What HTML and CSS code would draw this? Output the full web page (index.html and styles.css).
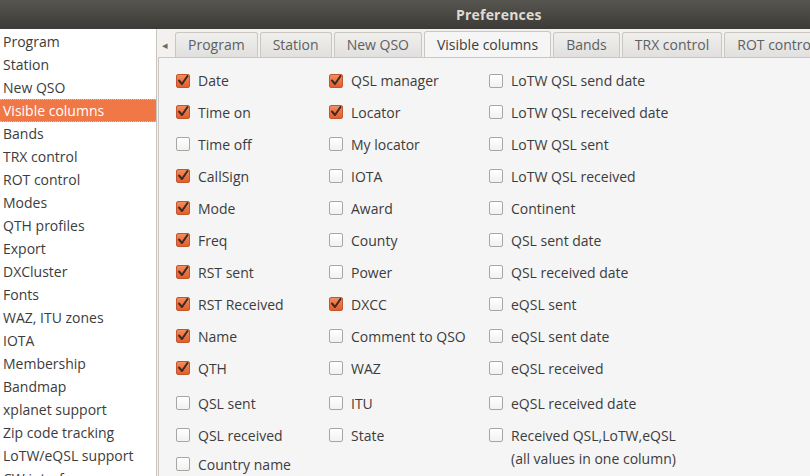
FILE: index.html
```html
<!DOCTYPE html>
<html>
<head>
<meta charset="utf-8">
<title>Preferences</title>
<link rel="stylesheet" href="styles.css">
</head>
<body>
<div class="window">
  <div class="titlebar"><span class="title">Preferences</span></div>
  <div class="main">
    <ul class="sidebar">
      <li>Program</li>
      <li>Station</li>
      <li>New QSO</li>
      <li class="selected">Visible columns</li>
      <li>Bands</li>
      <li>TRX control</li>
      <li>ROT control</li>
      <li>Modes</li>
      <li>QTH profiles</li>
      <li>Export</li>
      <li>DXCluster</li>
      <li>Fonts</li>
      <li>WAZ, ITU zones</li>
      <li>IOTA</li>
      <li>Membership</li>
      <li>Bandmap</li>
      <li>xplanet support</li>
      <li>Zip code tracking</li>
      <li>LoTW/eQSL support</li>
      <li>CW interface</li>
    </ul>
    <div class="tabpane">
      <div class="tabbar">
        <span class="arrow">&#9666;</span>
        <div class="tab">Program</div>
        <div class="tab">Station</div>
        <div class="tab">New QSO</div>
        <div class="tab active">Visible columns</div>
        <div class="tab">Bands</div>
        <div class="tab">TRX control</div>
        <div class="tab">ROT control</div>
      </div>
      <div class="panel">
        <div class="grid">
          <label class="item"><span class="box on"><svg viewBox="0 0 14 14"><path d="M3 6.5 L6 10 L11.5 2"/></svg></span>Date</label>
          <label class="item"><span class="box on"><svg viewBox="0 0 14 14"><path d="M3 6.5 L6 10 L11.5 2"/></svg></span>QSL manager</label>
          <label class="item"><span class="box"></span>LoTW QSL send date</label>

          <label class="item"><span class="box on"><svg viewBox="0 0 14 14"><path d="M3 6.5 L6 10 L11.5 2"/></svg></span>Time on</label>
          <label class="item"><span class="box on"><svg viewBox="0 0 14 14"><path d="M3 6.5 L6 10 L11.5 2"/></svg></span>Locator</label>
          <label class="item"><span class="box"></span>LoTW QSL received date</label>

          <label class="item"><span class="box"></span>Time off</label>
          <label class="item"><span class="box"></span>My locator</label>
          <label class="item"><span class="box"></span>LoTW QSL sent</label>

          <label class="item"><span class="box on"><svg viewBox="0 0 14 14"><path d="M3 6.5 L6 10 L11.5 2"/></svg></span>CallSign</label>
          <label class="item"><span class="box"></span>IOTA</label>
          <label class="item"><span class="box"></span>LoTW QSL received</label>

          <label class="item"><span class="box on"><svg viewBox="0 0 14 14"><path d="M3 6.5 L6 10 L11.5 2"/></svg></span>Mode</label>
          <label class="item"><span class="box"></span>Award</label>
          <label class="item"><span class="box"></span>Continent</label>

          <label class="item"><span class="box on"><svg viewBox="0 0 14 14"><path d="M3 6.5 L6 10 L11.5 2"/></svg></span>Freq</label>
          <label class="item"><span class="box"></span>County</label>
          <label class="item"><span class="box"></span>QSL sent date</label>

          <label class="item"><span class="box on"><svg viewBox="0 0 14 14"><path d="M3 6.5 L6 10 L11.5 2"/></svg></span>RST sent</label>
          <label class="item"><span class="box"></span>Power</label>
          <label class="item"><span class="box"></span>QSL received date</label>

          <label class="item"><span class="box on"><svg viewBox="0 0 14 14"><path d="M3 6.5 L6 10 L11.5 2"/></svg></span>RST Received</label>
          <label class="item"><span class="box on"><svg viewBox="0 0 14 14"><path d="M3 6.5 L6 10 L11.5 2"/></svg></span>DXCC</label>
          <label class="item"><span class="box"></span>eQSL sent</label>

          <label class="item"><span class="box on"><svg viewBox="0 0 14 14"><path d="M3 6.5 L6 10 L11.5 2"/></svg></span>Name</label>
          <label class="item"><span class="box"></span>Comment to QSO</label>
          <label class="item"><span class="box"></span>eQSL sent date</label>

          <label class="item"><span class="box on"><svg viewBox="0 0 14 14"><path d="M3 6.5 L6 10 L11.5 2"/></svg></span>QTH</label>
          <label class="item"><span class="box"></span>WAZ</label>
          <label class="item"><span class="box"></span>eQSL received</label>

          <label class="item"><span class="box"></span>QSL sent</label>
          <label class="item"><span class="box"></span>ITU</label>
          <label class="item"><span class="box"></span>eQSL received date</label>

          <label class="item"><span class="box"></span>QSL received</label>
          <label class="item"><span class="box"></span>State</label>
          <label class="item multi"><span class="box"></span><span class="ml">Received QSL,LoTW,eQSL<br>(all values in one column)</span></label>

          <label class="item"><span class="box"></span>Country name</label>
          <span class="empty"></span>
        </div>
      </div>
    </div>
  </div>
</div>
</body>
</html>
```

FILE: styles.css
```css
html, body {
  margin: 0;
  padding: 0;
}
body {
  width: 810px;
  height: 476px;
  overflow: hidden;
  background: #f2f1f0;
  font-family: "Open Sans", "DejaVu Sans", sans-serif;
  font-size: 14px;
  color: #3c3c3c;
}
.window {
  display: flex;
  flex-direction: column;
  height: 476px;
}
.titlebar {
  height: 29px;
  flex: none;
  background: linear-gradient(#57554f, #3c3b37);
  display: flex;
  align-items: center;
  padding-left: 456px;
  box-sizing: border-box;
}
.title {
  color: #dfdbd2;
  font-weight: bold;
  font-size: 14px;
  letter-spacing: 0.2px;
}
.main {
  flex: 1;
  display: flex;
  min-height: 0;
}
.sidebar {
  list-style: none;
  margin: 0;
  padding: 1px 0 0 0;
  width: 156px;
  flex: none;
  background: #ffffff;
  border-right: 1px solid #c9c5c1;
  overflow: hidden;
}
.sidebar li {
  height: 23px;
  line-height: 23px;
  padding-left: 3px;
  box-sizing: border-box;
  white-space: nowrap;
}
.sidebar li.selected {
  background: #f07746;
  color: #ffffff;
  border-top: 1px dotted #f6b295;
  border-bottom: 1px dotted #f6b295;
  line-height: 21px;
}
.tabpane {
  flex: 1;
  display: flex;
  flex-direction: column;
  margin-left: 1px;
  min-width: 0;
}
.tabbar {
  height: 28px;
  flex: none;
  display: flex;
  align-items: flex-end;
  white-space: nowrap;
  overflow: hidden;
}
.arrow {
  width: 17px;
  flex: none;
  align-self: center;
  font-size: 11px;
  color: #6a6a6a;
  padding-left: 4px;
  box-sizing: border-box;
  margin-top: 3px;
}
.tab {
  flex: none;
  height: 25px;
  line-height: 24px;
  box-sizing: border-box;
  padding: 0 12px;
  margin-right: 2px;
  border: 1px solid #cbc6c1;
  border-bottom: none;
  border-radius: 3px 3px 0 0;
  background: linear-gradient(#efefee, #e1e0de);
  color: #5f5f5f;
}
.tab.active {
  height: 27px;
  line-height: 26px;
  background: #f5f5f5;
  color: #3c3c3c;
  margin-bottom: -1px;
  position: relative;
  z-index: 1;
}
.panel {
  flex: 1;
  background: #f5f5f5;
  border: 1px solid #cbc6c1;
  border-right: none;
  border-bottom: none;
  padding: 7px 0 0 17px;
  min-height: 0;
}
.grid {
  display: grid;
  grid-template-columns: 153px 160px 1fr;
  grid-template-rows: 31px repeat(9, 32px) 38px 26px 32px;
}
.item {
  display: flex;
  align-items: center;
  gap: 8px;
  white-space: nowrap;
}
.item.multi {
  grid-row: span 2;
  align-items: flex-start;
  padding-top: 2px;
}
.item.multi .box {
  margin-top: 4px;
}
.ml {
  text-align: center;
  line-height: 23px;
}
.box {
  width: 14px;
  height: 14px;
  flex: none;
  box-sizing: border-box;
  border: 1px solid #a9a5a1;
  border-radius: 2px;
  background: linear-gradient(#ffffff, #f1f1f1);
  display: flex;
}
.box.on {
  border-color: #c4562d;
  background: linear-gradient(#f38c5e, #e55d2c);
}
.box svg {
  width: 14px;
  height: 14px;
  margin: -1px;
  overflow: visible;
}
.box svg path {
  fill: none;
  stroke: #3b2a22;
  stroke-width: 2;
  stroke-linecap: round;
  stroke-linejoin: round;
}
```
